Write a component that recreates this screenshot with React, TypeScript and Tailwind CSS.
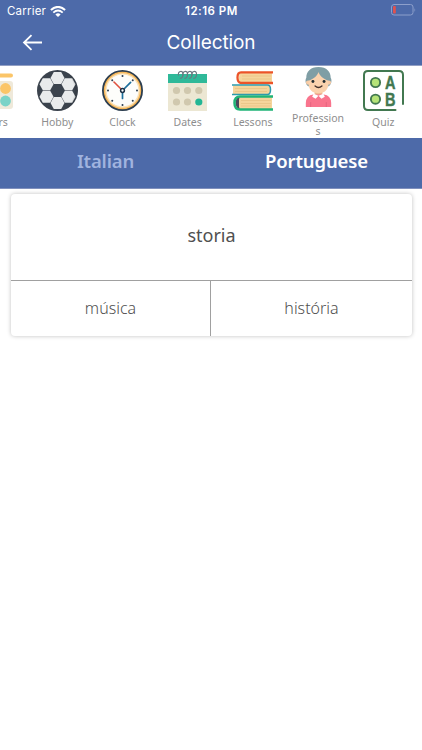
import type { ReactNode } from 'react';

const DrinksIcon = () => (
  <svg className="size-[41px]" viewBox="0 0 41 41">
    <rect x="6" y="3.5" width="35" height="4" rx="2" fill="#fbc568" />
    <rect x="4" y="11" width="37" height="28" rx="3" fill="#efe9da" />
    <circle cx="33.5" cy="18.5" r="5.4" fill="#fbc568" />
    <circle cx="33.5" cy="31" r="5.4" fill="#7bd3c8" />
  </svg>
);

const BallIcon = () => {
  // Light panels sit around the dark one in the middle
  const panels = [
    [20.5, 8],
    [31.5, 14.2],
    [31.5, 26.8],
    [20.5, 33],
    [9.5, 26.8],
    [9.5, 14.2],
  ];

  return (
    <svg className="size-[41px]" viewBox="0 0 41 41">
      <circle cx="20.5" cy="20.5" r="20.5" fill="#3b434d" />
      {panels.map(([x, y]) => (
        <path
          key={`${x}-${y}`}
          d="M-7 0L-3.7 -6H3.7L7 0L3.7 6H-3.7Z"
          transform={`translate(${x} ${y})`}
          fill="#e9ebec"
        />
      ))}
      <path d="M29 2A20.5 20.5 0 0 1 29 39Q38 30 38 20.5T29 2Z" fill="#000" opacity=".08" />
    </svg>
  );
};

const ClockIcon = () => (
  <svg className="size-[41px]" viewBox="0 0 41 41">
    <circle cx="20.5" cy="20.5" r="19.6" fill="#f6b85c" stroke="#2c3e50" strokeWidth="1.8" />
    <circle cx="20.5" cy="20.5" r="16.6" fill="#fdfdfb" stroke="#fbe3b8" strokeWidth="1.4" />
    {[0, 45, 90, 135, 180, 225, 270, 315].map((angle) => (
      <circle key={angle} cx="20.5" cy="6" r="1" fill="#2c3e50" transform={`rotate(${angle} 20.5 20.5)`} />
    ))}
    <path d="M19.5 19.5L12 12" stroke="#e0523f" strokeWidth="1.6" strokeLinecap="round" />
    <path d="M21.5 19.5L28.6 12.4M20.5 22V28.5" stroke="#1d6f9c" strokeWidth="1.7" strokeLinecap="round" />
    <circle cx="20.5" cy="20.5" r="1.9" fill="#fff" stroke="#1f3347" strokeWidth="1.5" />
  </svg>
);

const DatesIcon = () => (
  <svg className="size-[41px]" viewBox="0 0 41 41">
    <rect x="1" y="4" width="39" height="10" fill="#2fb999" />
    <rect x="1" y="13" width="39" height="28" fill="#ece7d3" />
    {[9.5, 20.5, 31.8].map((x) => (
      <circle key={x} cx={x} cy="20.5" r="3.6" fill="#d0c8ae" />
    ))}
    <circle cx="9.5" cy="32" r="3.6" fill="#d0c8ae" />
    <circle cx="20.5" cy="32" r="3.6" fill="#d0c8ae" />
    <circle cx="31.8" cy="32" r="3.6" fill="#22b695" />
    {[12, 16.5, 21, 25.5].map((x) => (
      <path
        key={x}
        d="M-.5 5C-1.5 .5 4 -.8 4 3.5C4 6 3 8.5 .8 7.5"
        transform={`translate(${x} .5)`}
        fill="none"
        stroke="#6b7780"
        strokeWidth="1.1"
      />
    ))}
  </svg>
);

const LessonsIcon = () => (
  <svg className="size-[41px]" viewBox="0 0 41 41">
    <path d="M40 3H9Q7 3 7 8T9 12.5H40Z" fill="#f5d59c" />
    <path d="M41 2.3H9Q5.5 2.3 5.5 7.5T9 13H41" fill="none" stroke="#ec5428" strokeWidth="2.3" />
    <path d="M10 6H39M10 9H39" stroke="#e4bd7d" strokeWidth=".6" />
    <path d="M1 15.5H36Q38 15.5 38 20T36 24H1Z" fill="#f5d59c" />
    <path d="M0 15H35.5Q38.5 15 38.5 19.7T35.5 24.5H0" fill="none" stroke="#2d9bac" strokeWidth="1.5" />
    <path d="M3 18.5H35M3 21.5H35" stroke="#e4bd7d" strokeWidth=".6" />
    <path d="M40 27H7V39H40Z" fill="#f5d59c" />
    <path d="M7 27Q2 33 7 39" fill="#4b485c" stroke="#4b485c" strokeWidth="2" />
    <path d="M41 26.6H8Q2.5 26.6 2.5 33T8 39.5H41" fill="none" stroke="#20b477" strokeWidth="2.5" />
    <path d="M9 30.5H39M9 33.5H39M9 36H39" stroke="#e4bd7d" strokeWidth=".6" />
  </svg>
);

const ProfessionsIcon = () => (
  <svg className="-mt-[3px] size-[41px]" viewBox="0 0 41 41">
    <path
      d="M20.5 0C12 0 8 5 8 11C6.5 13 7 19 11 20H30C34 19 34.5 13 33 11C33 5 29 0 20.5 0Z"
      fill="#7f9ea5"
    />
    <circle cx="9.8" cy="16" r="2.2" fill="#f8cba6" />
    <circle cx="31.2" cy="16" r="2.2" fill="#f8cba6" />
    <path d="M16.5 22H24.5V30H16.5Z" fill="#f0b78e" />
    <path
      d="M10.2 14C16 12 19.5 8.500 20.500 5C21.500 8.500 25 12 30.800 14V16.500C30.800 23 27 27 20.500 27S10.200 23 10.200 16.500Z"
      fill="#fbd2ad"
    />
    <circle cx="14.8" cy="14.8" r="1.5" fill="#232d31" />
    <circle cx="26.2" cy="14.8" r="1.5" fill="#232d31" />
    <path d="M17 19.5Q20.5 22.5 24 19.5" fill="none" stroke="#42302b" strokeWidth="1.4" strokeLinecap="round" />
    <path d="M7.5 41V37Q8 29 15 28.3H26Q33 29 33.5 37V41Z" fill="#f9748d" />
    <path d="M15.5 27.5L20.5 29.5L25.5 27.5L27 30.5L23.5 32.5L20.5 29.5L17.5 32.5L14 30.5Z" fill="#fff" />
    <path d="M12.5 36V41M28.5 36V41" stroke="#df607b" strokeWidth=".8" />
  </svg>
);

const QuizIcon = () => (
  <svg
    className="size-[41px] font-['Liberation_Sans',sans-serif] text-[17.5px] font-bold"
    viewBox="0 0 41 41"
  >
    <path
      d="M32.5 40H5Q1 40 1 36V5Q1 1 5 1H36Q40 1 40 5V34"
      fill="none"
      stroke="#427850"
      strokeWidth="2"
      strokeLinecap="round"
    />
    <circle cx="12.5" cy="12.5" r="4.6" fill="#b5e378" stroke="#427850" strokeWidth="1.9" />
    <circle cx="12.5" cy="29.2" r="4.6" fill="#b5e378" stroke="#427850" strokeWidth="1.9" />
    <g fill="#427850" stroke="#427850" strokeWidth=".4" textAnchor="middle">
      <text x="27.3" y="18.8" textLength="10.5" lengthAdjust="spacingAndGlyphs">
        A
      </text>
      <text x="27.3" y="35.8" textLength="10.5" lengthAdjust="spacingAndGlyphs">
        B
      </text>
    </g>
  </svg>
);

type Category = {
  id: number;
  label: string;
  icon: ReactNode;
};

const categories: Category[] = [
  { id: 1, label: 'Colors', icon: <DrinksIcon /> },
  { id: 2, label: 'Hobby', icon: <BallIcon /> },
  { id: 3, label: 'Clock', icon: <ClockIcon /> },
  { id: 4, label: 'Dates', icon: <DatesIcon /> },
  { id: 5, label: 'Lessons', icon: <LessonsIcon /> },
  { id: 6, label: 'Professions', icon: <ProfessionsIcon /> },
  { id: 7, label: 'Quiz', icon: <QuizIcon /> },
];

const StatusBar = () => (
  <div className="grid h-[22px] grid-cols-3 items-center pt-px pr-1.5 pl-[7px] font-[Inter,sans-serif] text-white">
    <div className="flex items-center gap-1">
      <span className="text-[11.5px] tracking-[0.2px]">Carrier</span>
      <svg className="h-[11px] w-4" viewBox="0 0 16 11">
        <path d="M.9 4.1Q8 -2.3 15.1 4.1" fill="none" stroke="#fff" strokeWidth="2" />
        <path d="M3.3 6.6Q8 2.4 12.7 6.6" fill="none" stroke="#fff" strokeWidth="1.9" />
        <path d="M5.4 8.4Q8 6.2 10.6 8.4L8 11Z" fill="#fff" />
      </svg>
    </div>
    <span className="text-center text-[11.5px] font-semibold tracking-[0.5px]">12:16 PM</span>
    <svg className="mb-[3px] h-3 w-[25px] justify-self-end" viewBox="0 0 25 12">
      <rect x=".5" y=".5" width="21.5" height="10.5" rx="2.5" fill="none" stroke="#8d9fcb" />
      <rect x="2" y="2" width="2.8" height="7.5" rx=".8" fill="#e0524f" />
      <path d="M23.5 4V8Q25 6 23.5 4Z" fill="#8d9fcb" />
    </svg>
  </div>
);

const App = () => {
  return (
    <div className="h-[750px] w-[422px] overflow-hidden bg-white font-['Noto_Sans',sans-serif]">
      <header className="h-[66px] border-b border-[#929fc4] bg-[#4d6aa9]">
        <StatusBar />
        <div className="grid h-[43px] grid-cols-[64px_1fr_64px] items-center">
          <button className="pb-[3px] pl-[22px]">
            <svg className="h-5 w-[21px]" viewBox="0 0 21 20" fill="none" stroke="#fff" strokeWidth="1.8">
              <path d="M20 10.5H2M9.5 3.2L2 10.5L9.5 17.8" />
            </svg>
          </button>
          <h1 className="text-center font-[Inter,sans-serif] text-[19px] tracking-[-0.1px] text-white">Collection</h1>
        </div>
      </header>

      {/* Category strip, scrolled a little to the left */}
      <nav className="-ml-[40.5px] flex h-[72px] w-[470px] pt-1">
        {categories.map((category) => (
          <div key={category.id} className="flex w-[65.2px] shrink-0 flex-col items-center">
            {category.icon}
            <span className="mt-[5px] w-[54px] text-center text-[10.5px] leading-[13px] break-all text-[#8e8e8e]">
              {category.label}
            </span>
          </div>
        ))}
      </nav>

      <div className="grid h-[51px] grid-cols-2 items-center border-b border-[#8090bd] bg-[#4d6aa9] pb-1 text-center text-[18.5px] font-semibold tracking-[-0.15px]">
        <span className="text-[#a0b3df]">Italian</span>
        <span className="text-white">Portuguese</span>
      </div>

      {/* Word card */}
      <main className="mt-[5px] mr-2.5 ml-[11px] h-[142px] rounded bg-white text-[#505050] shadow-[0_0_4px_rgba(0,0,0,0.25)]">
        <div className="flex h-[87px] items-center justify-center border-b border-[#a0a0a0] pb-[3px] text-[18px]">
          storia
        </div>
        <div className="grid h-[55px] grid-cols-[200px_1fr] text-[16px] font-light">
          <div className="flex items-center justify-center border-r border-[#a0a0a0] pb-0.5">música</div>
          <div className="flex items-center justify-center pb-0.5">história</div>
        </div>
      </main>
    </div>
  );
};

export default App;
